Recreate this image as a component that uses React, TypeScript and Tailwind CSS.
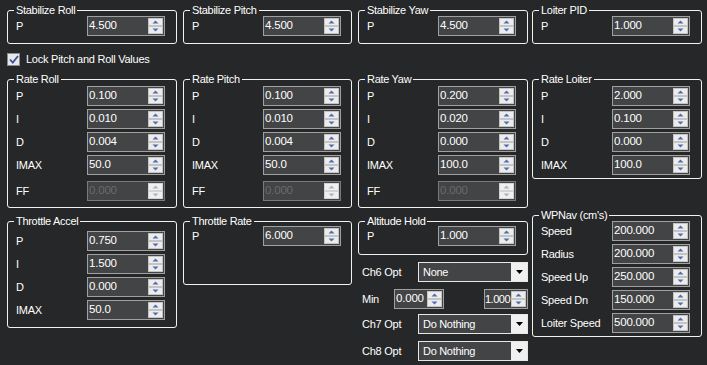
import React from "react";

type RowDef = { label: string; value: string; disabled?: boolean; mt?: string };

function Spinner({ disabled }: { disabled?: boolean }) {
  const c = disabled ? "#b4b4b4" : "#4f6db0";
  return (
    <div className="flex w-[16px] shrink-0 flex-col py-px pr-px">
      <div className={`flex flex-1 items-center justify-center border ${disabled ? "border-[#d4d4d4] bg-[#f0f0f0]" : "border-[#c4c4c4] bg-[#ececec]"}`}>
        <svg width="7" height="4" viewBox="0 0 7 4">
          <path d="M0.5 3.5 L3.5 0.5 L6.5 3.5 Z" fill={c} />
        </svg>
      </div>
      <div className={`flex flex-1 items-center justify-center border ${disabled ? "border-[#d4d4d4] bg-[#f0f0f0]" : "border-[#c4c4c4] bg-[#ececec]"}`}>
        <svg width="7" height="4" viewBox="0 0 7 4">
          <path d="M0.5 0.5 L6.5 0.5 L3.5 3.5 Z" fill={c} />
        </svg>
      </div>
    </div>
  );
}

function NumBox({
  value,
  disabled,
  w = "w-[78px]",
  tight,
}: {
  value: string;
  disabled?: boolean;
  w?: string;
  tight?: boolean;
}) {
  return (
    <div className={`flex h-[20px] ${w} border ${disabled ? "border-[#7a7a7a]" : "border-[#a0a0a0]"} bg-[#434445]`}>
      <span
        className={`flex min-w-0 flex-1 items-center whitespace-nowrap leading-none ${
          tight ? "pl-0 text-[11px] tracking-[-0.5px]" : "pl-[1px] text-[11.5px] tracking-[-0.2px]"
        } ${disabled ? "text-[#6a6a6a]" : "text-white"}`}
      >
        {value}
      </span>
      <Spinner disabled={disabled} />
    </div>
  );
}

function Row({ label, value, disabled, mt = "" }: RowDef) {
  return (
    <div className={`flex h-[20px] items-center ${mt}`}>
      <span className="w-[79px] pl-[8px] text-[11px] leading-none tracking-[-0.25px]">{label}</span>
      <NumBox value={value} disabled={disabled} />
    </div>
  );
}

function Group({ title, className = "", children }: { title: string; className?: string; children: React.ReactNode }) {
  return (
    <div className={`relative rounded-[3px] border border-[#f2f2f2] ${className}`}>
      <span className="absolute -top-[7px] left-[6px] bg-[#262728] px-[2px] text-[11px] leading-[12px] tracking-[-0.3px] whitespace-nowrap">
        {title}
      </span>
      {children}
    </div>
  );
}

function Rows({ rows }: { rows: RowDef[] }) {
  return (
    <>
      {rows.map((r, i) => (
        <Row key={i} {...r} />
      ))}
    </>
  );
}

function Dropdown({ value }: { value: string }) {
  return (
    <div className="flex h-[20px] w-[110px] border border-[#e6e6e6] bg-[#434445]">
      <span className="flex flex-1 items-center pl-[4px] text-[11px] leading-none tracking-[-0.3px]">{value}</span>
      <div className="flex w-[16px] items-center justify-center bg-[#f0f0f0]">
        <svg width="7" height="4" viewBox="0 0 7 4">
          <path d="M0 0 L7 0 L3.5 4 Z" fill="#000" />
        </svg>
      </div>
    </div>
  );
}

function Stab({ title, value }: { title: string; value: string }) {
  return (
    <Group title={title} className="pt-[5px] pb-[7px]">
      <Row label="P" value={value} />
    </Group>
  );
}

const rateRows = (p: string, i: string, d: string, imax: string): RowDef[] => [
  { label: "P", value: p },
  { label: "I", value: i, mt: "mt-[3px]" },
  { label: "D", value: d, mt: "mt-[3px]" },
  { label: "IMAX", value: imax, mt: "mt-[3px]" },
  { label: "FF", value: "0.000", disabled: true, mt: "mt-[6px]" },
];

export default function App() {
  return (
    <div className="relative h-[365px] w-[707px] overflow-hidden bg-[#262728] font-['Liberation_Sans',Arial,sans-serif] text-white">
      <div className="flex items-start">
        {/* Column 1 */}
        <div className="ml-[7px] flex w-[170px] flex-col">
          <div className="mt-[10px]">
            <Stab title="Stabilize Roll" value="4.500" />
          </div>
          <div className="mt-[9px] flex h-[13px] items-center">
            <div className="flex h-[13px] w-[13px] items-center justify-center border border-[#8c8c8c] bg-[#e8e8e8]">
              <svg width="10" height="9" viewBox="0 0 10 9">
                <path d="M1 4.5 L3.8 7.5 L9 1" fill="none" stroke="#3a4ea6" strokeWidth="1.8" />
              </svg>
            </div>
            <span className="ml-[6px] text-[11px] leading-none tracking-[-0.25px]">Lock Pitch and Roll Values</span>
          </div>
          <Group title="Rate Roll" className="mt-[13px] pt-[6px] pb-[6px]">
            <Rows rows={rateRows("0.100", "0.010", "0.004", "50.0")} />
          </Group>
          <Group title="Throttle Accel" className="mt-[13px] pt-[9px] pb-[7px]">
            <Rows
              rows={[
                { label: "P", value: "0.750" },
                { label: "I", value: "1.500", mt: "mt-[3px]" },
                { label: "D", value: "0.000", mt: "mt-[3px]" },
                { label: "IMAX", value: "50.0", mt: "mt-[3px]" },
              ]}
            />
          </Group>
        </div>

        {/* Column 2 */}
        <div className="ml-[6px] flex w-[169px] flex-col">
          <div className="mt-[10px]">
            <Stab title="Stabilize Pitch" value="4.500" />
          </div>
          <Group title="Rate Pitch" className="mt-[35px] pt-[6px] pb-[6px]">
            <Rows rows={rateRows("0.100", "0.010", "0.004", "50.0")} />
          </Group>
          <Group title="Throttle Rate" className="mt-[13px] pt-[4px] pb-[38px]">
            <Row label="P" value="6.000" />
          </Group>
        </div>

        {/* Column 3 */}
        <div className="ml-[6px] flex w-[170px] flex-col">
          <div className="mt-[10px]">
            <Stab title="Stabilize Yaw" value="4.500" />
          </div>
          <Group title="Rate Yaw" className="mt-[35px] pt-[6px] pb-[6px]">
            <Rows rows={rateRows("0.200", "0.020", "0.000", "100.0")} />
          </Group>
          <Group title="Altitude Hold" className="mt-[13px] pt-[4px] pb-[8px]">
            <Row label="P" value="1.000" />
          </Group>
          <div className="mt-[7px] flex h-[20px] items-center">
            <span className="w-[60px] pl-[4px] text-[11px] leading-none tracking-[-0.25px]">Ch6 Opt</span>
            <Dropdown value="None" />
          </div>
          <div className="mt-[7px] flex h-[20px] items-center">
            <span className="w-[36px] pl-[4px] text-[11px] leading-none tracking-[-0.25px]">Min</span>
            <NumBox value="0.000" w="w-[50px]" />
            <div className="ml-[40px]">
              <NumBox value="1.000" w="w-[44px]" tight />
            </div>
          </div>
          <div className="mt-[5px] flex h-[20px] items-center">
            <span className="w-[60px] pl-[4px] text-[11px] leading-none tracking-[-0.25px]">Ch7 Opt</span>
            <Dropdown value="Do Nothing" />
          </div>
          <div className="mt-[7px] flex h-[20px] items-center">
            <span className="w-[60px] pl-[4px] text-[11px] leading-none tracking-[-0.25px]">Ch8 Opt</span>
            <Dropdown value="Do Nothing" />
          </div>
        </div>

        {/* Column 4 */}
        <div className="ml-[4px] flex w-[170px] flex-col">
          <div className="mt-[10px]">
            <Stab title="Loiter PID" value="1.000" />
          </div>
          <Group title="Rate Loiter" className="mt-[35px] pt-[6px] pb-[3px]">
            <Rows
              rows={[
                { label: "P", value: "2.000" },
                { label: "I", value: "0.100", mt: "mt-[3px]" },
                { label: "D", value: "0.000", mt: "mt-[3px]" },
                { label: "IMAX", value: "100.0", mt: "mt-[3px]" },
              ]}
            />
          </Group>
          <Group title="WPNav (cm's)" className="mt-[36px] pt-[5px] pb-[3px]">
            <Rows
              rows={[
                { label: "Speed", value: "200.000" },
                { label: "Radius", value: "200.000", mt: "mt-[3px]" },
                { label: "Speed Up", value: "250.000", mt: "mt-[3px]" },
                { label: "Speed Dn", value: "150.000", mt: "mt-[3px]" },
                { label: "Loiter Speed", value: "500.000", mt: "mt-[3px]" },
              ]}
            />
          </Group>
        </div>
      </div>
    </div>
  );
}
